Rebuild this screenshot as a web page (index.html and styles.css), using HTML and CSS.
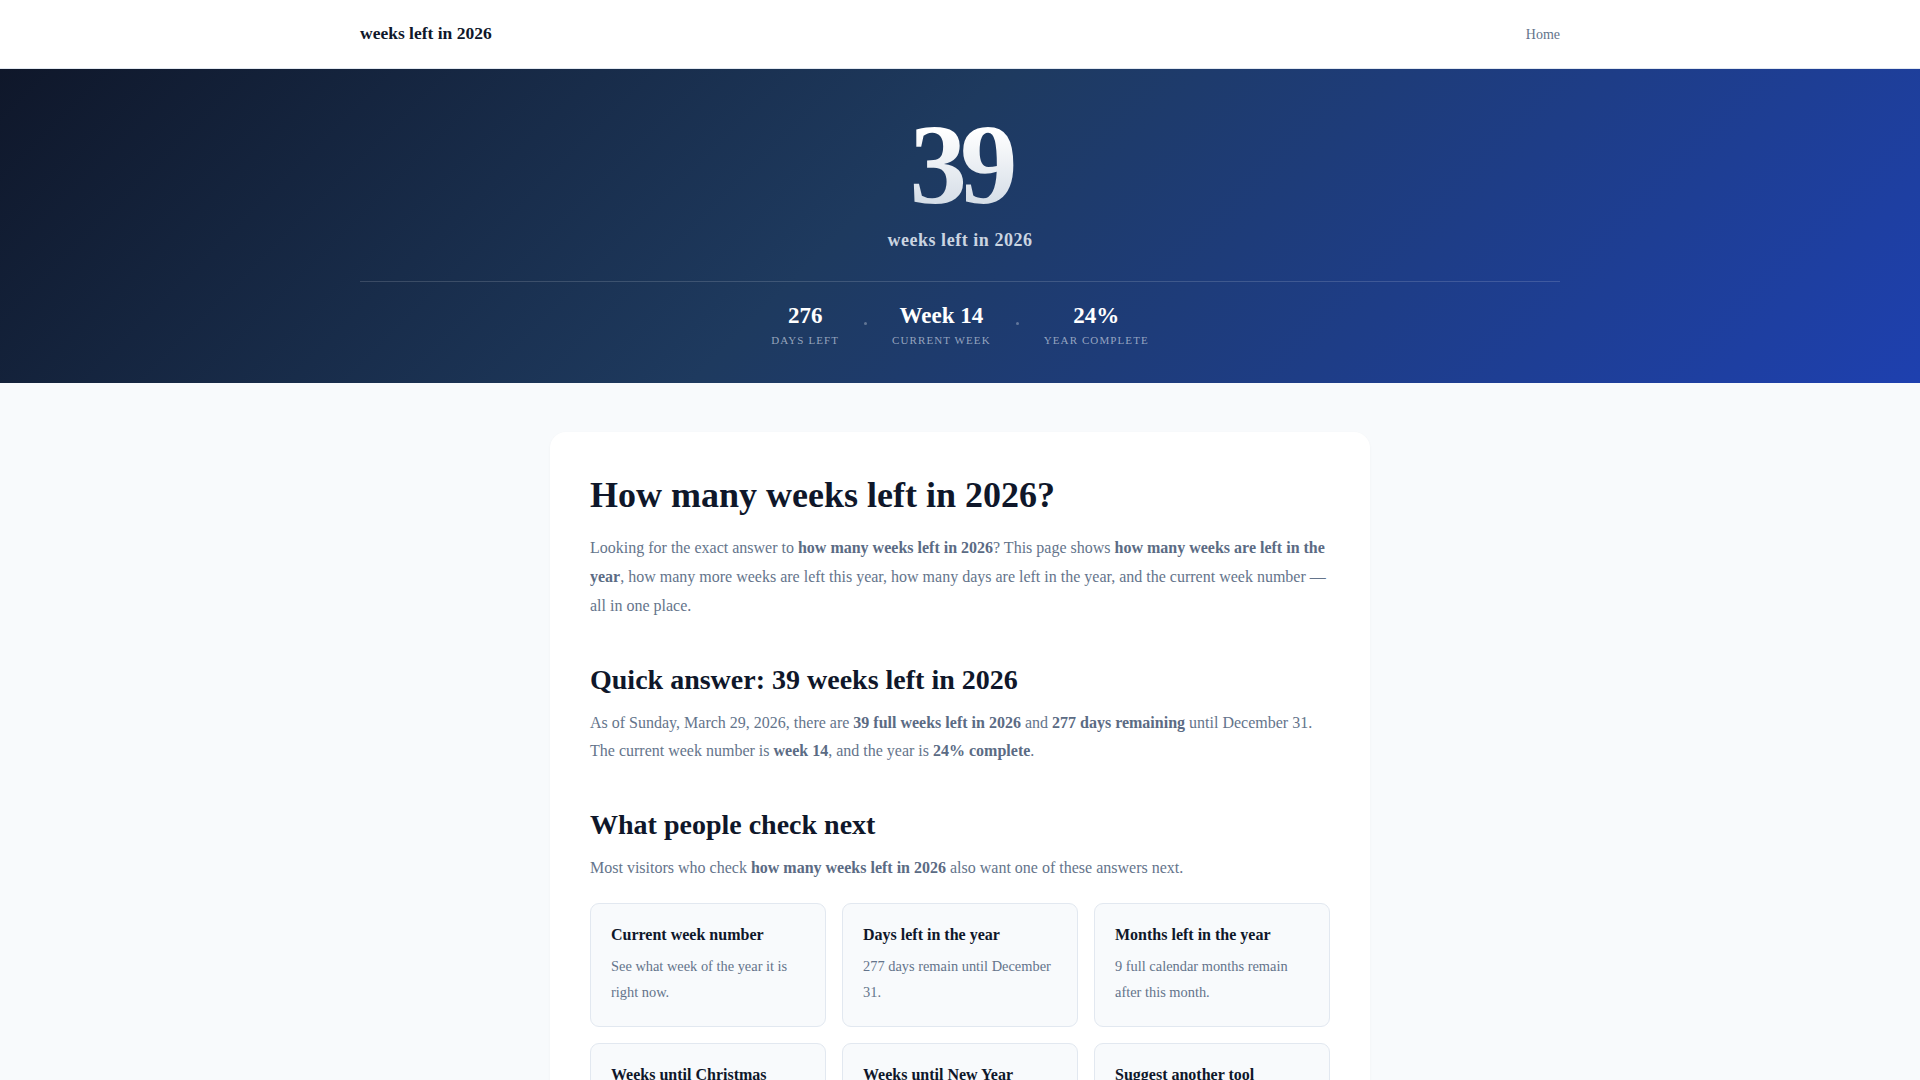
FILE: index.html
```html
<!DOCTYPE html>
<html lang="en">
<head>
<meta charset="utf-8">
<title>Weeks left in 2026</title>
<link rel="stylesheet" href="styles.css">
</head>
<body>
<header class="site-header">
  <div class="container header-inner">
    <a class="logo" href="#">weeks left in 2026</a>
    <nav class="nav"><a href="#">Home</a></nav>
  </div>
</header>
<section class="hero">
  <div class="container">
    <div class="hero-main">
      <div class="big-number">39</div>
      <div class="hero-sub">weeks left in 2026</div>
    </div>
    <div class="stats">
      <div class="stat">
        <div class="stat-value">276</div>
        <div class="stat-label">Days left</div>
      </div>
      <span class="stat-dot"></span>
      <div class="stat">
        <div class="stat-value">Week 14</div>
        <div class="stat-label">Current week</div>
      </div>
      <span class="stat-dot"></span>
      <div class="stat">
        <div class="stat-value">24%</div>
        <div class="stat-label">Year complete</div>
      </div>
    </div>
  </div>
</section>
<main class="main">
  <article class="card">
    <h1>How many weeks left in 2026?</h1>
    <p>Looking for the exact answer to <strong>how many weeks left in 2026</strong>? This page shows <strong>how many weeks are left in the year</strong>, how many more weeks are left this year, how many days are left in the year, and the current week number — all in one place.</p>
    <h2>Quick answer: 39 weeks left in 2026</h2>
    <p>As of Sunday, March 29, 2026, there are <strong>39 full weeks left in 2026</strong> and <strong>277 days remaining</strong> until December 31. The current week number is <strong>week 14</strong>, and the year is <strong>24% complete</strong>.</p>
    <h2>What people check next</h2>
    <p>Most visitors who check <strong>how many weeks left in 2026</strong> also want one of these answers next.</p>
    <div class="links">
      <a class="link-card" href="#"><h3>Current week number</h3><p>See what week of the year it is right now.</p></a>
      <a class="link-card" href="#"><h3>Days left in the year</h3><p>277 days remain until December 31.</p></a>
      <a class="link-card" href="#"><h3>Months left in the year</h3><p>9 full calendar months remain after this month.</p></a>
      <a class="link-card" href="#"><h3>Weeks until Christmas</h3><p>Count the weeks until December 25.</p></a>
      <a class="link-card" href="#"><h3>Weeks until New Year</h3><p>Count down to January 1, 2027.</p></a>
      <a class="link-card" href="#"><h3>Suggest another tool</h3><p>Tell us what you would like to see next.</p></a>
    </div>
  </article>
</main>
</body>
</html>
```

FILE: styles.css
```css
* { box-sizing: border-box; }
html, body { margin: 0; padding: 0; }
body {
  font-family: "Liberation Serif", "Times New Roman", serif;
  background: #f8fafc;
  color: #0f172a;
}
a { text-decoration: none; color: inherit; }
.container { max-width: 1200px; margin: 0 auto; }

.site-header {
  background: #ffffff;
  border-bottom: 1px solid #e2e8f0;
  height: 69px;
}
.header-inner {
  height: 68px;
  display: flex;
  align-items: center;
  justify-content: space-between;
}
.logo {
  font-size: 17.5px;
  font-weight: 700;
  color: #0f172a;
  margin-top: -2px;
}
.nav a {
  font-size: 14px;
  color: #64748b;
}

.hero {
  background: linear-gradient(135deg, #0f172a 0%, #1e3a5f 45%, #1e40af 100%);
  color: #ffffff;
  height: 314px;
  padding-top: 38px;
}
.hero-main {
  text-align: center;
  padding-bottom: 30px;
  border-bottom: 1px solid rgba(255,255,255,0.15);
}
.big-number {
  font-size: 115px;
  font-weight: 700;
  line-height: 1;
  letter-spacing: -0.06em;
  background: linear-gradient(180deg, #ffffff 20%, #cbd5e1 100%);
  -webkit-background-clip: text;
  background-clip: text;
  color: transparent;
  display: inline-block;
  padding: 0 8px;
}
.hero-sub {
  margin-top: 8px;
  font-size: 18px;
  font-weight: 700;
  letter-spacing: 0.03em;
  color: #cbd5e1;
}
.stats {
  display: flex;
  justify-content: center;
  align-items: center;
  gap: 25px;
  padding-top: 19px;
}
.stat { text-align: center; }
.stat-value {
  font-size: 23px;
  font-weight: 700;
  line-height: 30px;
  color: #ffffff;
}
.stat-label {
  margin-top: 3px;
  font-size: 11px;
  letter-spacing: 0.1em;
  text-transform: uppercase;
  color: rgba(203,213,225,0.7);
}
.stat-dot {
  width: 3px;
  height: 3px;
  border-radius: 50%;
  background: rgba(255,255,255,0.3);
  margin-top: -1px;
}

.main {
  padding: 49px 0 60px;
}
.card {
  max-width: 820px;
  margin: 0 auto;
  background: #ffffff;
  border-radius: 16px;
  padding: 42px 40px 40px;
  box-shadow: 0 1px 3px rgba(15,23,42,0.04);
}
.card h1 {
  margin: 0 0 17px;
  font-size: 36px;
  line-height: 1.2;
  font-weight: 700;
  color: #0f172a;
}
.card h2 {
  margin: 41px 0 12px;
  font-size: 28px;
  line-height: 1.25;
  font-weight: 700;
  color: #0f172a;
}
.card p {
  margin: 0;
  font-size: 16px;
  line-height: 1.8;
  color: #64748b;
}
.card p strong { color: #5b6b84; }
.links {
  margin-top: 20px;
  display: grid;
  grid-template-columns: repeat(3, 1fr);
  gap: 16px;
}
.link-card {
  display: block;
  background: #f8fafc;
  border: 1px solid #e2e8f0;
  border-radius: 9px;
  padding: 20px 20px 20px;
}
.link-card h3 {
  margin: 0 0 8px;
  font-size: 16px;
  font-weight: 700;
  color: #0f172a;
  line-height: 22px;
}
.link-card p {
  margin: 0;
  font-size: 14.4px;
  line-height: 1.8;
  color: #64748b;
}
```
